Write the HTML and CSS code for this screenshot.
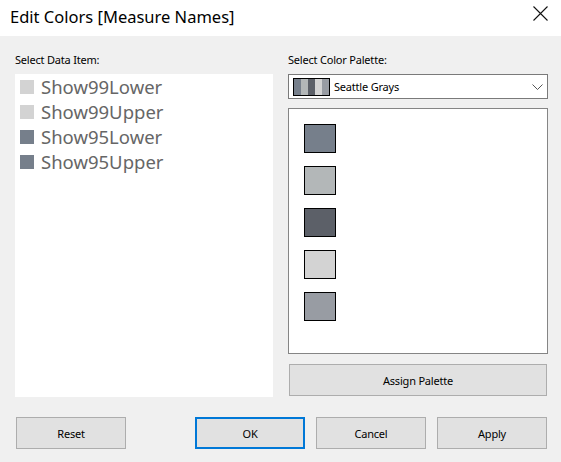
FILE: index.html
```html
<!DOCTYPE html>
<html>
<head>
<meta charset="utf-8">
<link rel="stylesheet" href="styles.css">
</head>
<body>
<div class="dialog">
  <div class="titlebar">
    <span class="title">Edit Colors [Measure Names]</span>
    <svg class="close" width="15" height="15" viewBox="0 0 15 15"><path d="M0.5 0.5 L14.5 14.5 M14.5 0.5 L0.5 14.5" stroke="#111" stroke-width="1.1" fill="none"/></svg>
  </div>
  <div class="content">
    <div class="label">Select Data Item:</div>
    <div class="label">Select Color Palette:</div>
    <div class="listbox">
      <div class="item"><span class="chip light"></span>Show99Lower</div>
      <div class="item"><span class="chip light"></span>Show99Upper</div>
      <div class="item"><span class="chip blue"></span>Show95Lower</div>
      <div class="item"><span class="chip blue"></span>Show95Upper</div>
    </div>
    <div class="right">
      <div class="dropdown">
        <div class="swatch">
          <span class="s1"></span><span class="s2"></span><span class="s3"></span><span class="s4"></span><span class="s5"></span>
        </div>
        <span class="ddtext">Seattle Grays</span>
        <svg class="chev" width="11" height="6" viewBox="0 0 11 6"><path d="M0.5 0.5 L5.5 5.5 L10.5 0.5" stroke="#555" stroke-width="1" fill="none"/></svg>
      </div>
      <div class="palette">
        <span class="sq s1"></span>
        <span class="sq s2"></span>
        <span class="sq s3"></span>
        <span class="sq s4"></span>
        <span class="sq s5"></span>
      </div>
      <div class="btn assign">Assign Palette</div>
    </div>
  </div>
  <div class="buttons">
    <div class="btn reset">Reset</div>
    <div class="btn ok">OK</div>
    <div class="btn">Cancel</div>
    <div class="btn">Apply</div>
  </div>
</div>
</body>
</html>
```

FILE: styles.css
```css
html, body {
  margin: 0;
  padding: 0;
}
body {
  width: 561px;
  height: 462px;
  background: #f0f0f0;
  font-family: "Noto Sans", "Open Sans", sans-serif;
  color: #000;
  overflow: hidden;
}
.titlebar {
  height: 36px;
  background: #fff;
  display: flex;
  align-items: center;
  justify-content: space-between;
  padding: 0 14px 0 10px;
}
.title {
  font-size: 16.5px;
  line-height: 20px;
  position: relative;
  top: -1px;
}
.close {
  display: block;
  position: relative;
  top: -5px;
  left: 1px;
}
.content {
  display: grid;
  grid-template-columns: 258px 260px;
  grid-template-rows: auto auto;
  column-gap: 15px;
  padding: 16px 0 0 15px;
}
.label {
  font-size: 11px;
  line-height: 16px;
  margin-bottom: 6px;
  letter-spacing: -0.2px;
}
.listbox {
  background: #fff;
  height: 323px;
  padding-top: 0;
  box-sizing: border-box;
}
.item {
  display: flex;
  align-items: center;
  height: 25px;
  padding-left: 5px;
  font-size: 18.5px;
  color: #666;
  font-weight: 400;
}
.chip {
  width: 14px;
  height: 14px;
  margin-right: 7px;
  flex: none;
}
.chip.light { background: #d3d3d3; }
.chip.blue { background: #767f8b; }
.right {
  display: flex;
  flex-direction: column;
}
.dropdown {
  height: 25px;
  box-sizing: border-box;
  border: 1px solid #7a7a7a;
  background: #fff;
  display: flex;
  align-items: center;
  padding-left: 4px;
}
.swatch {
  width: 37px;
  height: 18px;
  box-sizing: border-box;
  border: 1px solid #000;
  display: flex;
}
.swatch span { flex: 1; }
.s1 { background: #767f8b; }
.s2 { background: #b3b7b8; }
.s3 { background: #5c6068; }
.s4 { background: #d3d3d3; }
.s5 { background: #989ca3; }
.ddtext {
  font-size: 11px;
  margin-left: 4px;
  flex: 1;
  letter-spacing: -0.2px;
}
.chev {
  display: block;
  margin-right: 4px;
}
.palette {
  margin-top: 9px;
  height: 246px;
  box-sizing: border-box;
  border: 1px solid #858585;
  background: #fff;
  padding: 15px 0 0 15px;
  display: flex;
  flex-direction: column;
  gap: 13px;
}
.sq {
  width: 32px;
  height: 29px;
  box-sizing: border-box;
  border: 1px solid #000;
}
.btn {
  box-sizing: border-box;
  width: 110px;
  height: 32px;
  border: 1px solid #adadad;
  background: #e1e1e1;
  font-size: 11px;
  letter-spacing: -0.2px;
  display: flex;
  align-items: center;
  justify-content: center;
}
.assign {
  margin-top: 10px;
  margin-left: 1px;
  width: 258px;
}
.buttons {
  display: flex;
  gap: 11px;
  padding: 20px 14px 0 16px;
}
.reset {
  margin-right: auto;
}
.ok {
  border: 2px solid #0078d7;
}
```
